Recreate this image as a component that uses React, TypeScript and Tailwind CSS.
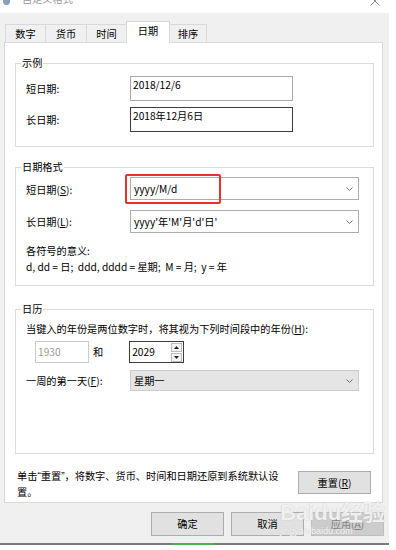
import React from "react";

const Chevron = ({ color = "#707070" }: { color?: string }) => (
  <svg width="9" height="6" viewBox="0 0 9 6" className="shrink-0">
    <path d="M1.5 1.5 L4.5 4.5 L7.5 1.5" fill="none" stroke={color} strokeWidth="1" />
  </svg>
);

const U = ({ c }: { c: string }) => <span className="underline underline-offset-[1px]">{c}</span>;

const Q = ({ c }: { c: string }) => <span className="font-['Liberation_Sans',sans-serif]">{c}</span>;

function Combo({ text, gray = false, w = "w-[229px]", h = "h-[23px]" }: { text: string; gray?: boolean; w?: string; h?: string }) {
  return (
    <div
      className={`${w} ${h} flex items-center justify-between pl-[3px] pr-[4px] border ${
        gray ? "bg-[#e5e5e5] border-[#cccccc]" : "bg-white border-[#adadad]"
      }`}
    >
      <span className="whitespace-nowrap">{text}</span>
      <Chevron />
    </div>
  );
}

function Group({ title, className, children }: { title: string; className: string; children: React.ReactNode }) {
  return (
    <div className={`relative ml-[10px] w-[359px] border border-[#dcdcdc] ${className}`}>
      <span className="absolute left-[5px] -top-[9px] bg-white px-[1px] leading-[16px]">{title}</span>
      {children}
    </div>
  );
}

export default function App() {
  const tabBase = "flex items-center justify-center border-t border-l border-r border-[#d9d9d9] -ml-px";
  return (
    <div className="w-[396px] h-[550px] bg-white overflow-hidden relative font-['Microsoft_YaHei_UI','Noto_Sans_CJK_SC',sans-serif] text-[10.2px] text-black">
      {/* title bar */}
      <div className="h-[13px] w-[389px] overflow-hidden flex items-start">
        <div className="-mt-[6px] ml-[3px] w-[7px] h-[11px] rounded-sm bg-[#8aa0b8]" />
        <span className="-mt-[9px] ml-[12px] text-[#9a9a9a] leading-[16px] whitespace-nowrap">自定义格式</span>
        <div className="flex-1" />
        <svg width="10" height="10" viewBox="0 0 10 10" className="-mt-[4px] mr-[9px]">
          <path d="M0.5 0.5 L9.5 9.5 M9.5 0.5 L0.5 9.5" stroke="#8a8a8a" strokeWidth="1" />
        </svg>
      </div>

      {/* dialog body */}
      <div className="w-[389px] h-[530px] bg-[#f0f0f0] flex flex-col">
        {/* tabs */}
        <div className="h-[30px] pl-[6px] flex items-end relative z-10 -mb-px">
          <div className={`${tabBase} w-[41px] h-[18px] mb-px bg-[#f0f0f0]`}>数字</div>
          <div className={`${tabBase} w-[42px] h-[18px] mb-px bg-[#f0f0f0]`}>货币</div>
          <div className={`${tabBase} w-[41px] h-[18px] mb-px bg-[#f0f0f0]`}>时间</div>
          <div className={`${tabBase} w-[44px] h-[22px] bg-white pb-[3px] relative z-10`}>日期</div>
          <div className={`${tabBase} w-[38px] h-[18px] mb-px bg-[#f0f0f0]`}>排序</div>
        </div>

        {/* panel */}
        <div className="ml-[4px] w-[379px] h-[461px] border border-[#d9d9d9] bg-white flex flex-col">
          {/* 示例 */}
          <Group title="示例" className="mt-[20px] h-[84px] pt-[12px] pl-[10px]">
            <div className="flex items-center h-[25px]">
              <span className="w-[104px]">短日期:</span>
              <div className="w-[163px] h-[25px] border border-[#a8a8a8] pl-[2px] leading-[16px]">2018/12/6</div>
            </div>
            <div className="flex items-center h-[25px] mt-[6px]">
              <span className="w-[104px]">长日期:</span>
              <div className="w-[163px] h-[25px] border border-[#3c3c3c] pl-[2px] leading-[16px]">2018年12月6日</div>
            </div>
          </Group>

          {/* 日期格式 */}
          <Group title="日期格式" className="mt-[20px] h-[119px] pt-[9px] pl-[10px]">
            <div className="flex items-center h-[23px]">
              <span className="w-[104px] pt-[2px]">
                短日期(<U c="S" />):
              </span>
              <div className="relative">
                <Combo text="yyyy/M/d" />
                <div className="absolute -left-[5px] -top-[3px] w-[96px] h-[30px] border-2 border-[#e8322e] rounded-[2px]" />
              </div>
            </div>
            <div className="flex items-center h-[23px] mt-[10px]">
              <span className="w-[104px]">
                长日期(<U c="L" />):
              </span>
              <Combo text="yyyy'年'M'月'd'日'" />
            </div>
            <div className="mt-[10px] leading-[16px]">各符号的意义:</div>
            <div className="leading-[16px] whitespace-pre">d, dd = 日;  ddd, dddd = 星期;  M = 月;  y = 年</div>
          </Group>

          {/* 日历 */}
          <Group title="日历" className="mt-[23px] h-[145px] pt-[11px] pl-[10px]">
            <div className="leading-[16px] whitespace-nowrap">
              当键入的年份是两位数字时，将其视为下列时间段中的年份(<U c="H" />):
            </div>
            <div className="flex items-center h-[22px] mt-[4px]">
              <div className="ml-[9px] w-[54px] h-[22px] border border-[#cccccc] flex items-center pl-[2px] text-[#9a9a9a]">
                1930
              </div>
              <span className="ml-[4px]">和</span>
              <div className="ml-[26px] w-[55px] h-[22px] border border-[#3c3c3c] flex items-center justify-between pl-[2px] pr-[1px]">
                <span>2029</span>
                <div className="flex flex-col gap-[1px]">
                  <div className="w-[11px] h-[9px] border border-[#bdbdbd] bg-[#f4f4f4] flex items-center justify-center">
                    <svg width="5" height="3" viewBox="0 0 5 3"><path d="M0 3 L2.5 0 L5 3 Z" fill="#222" /></svg>
                  </div>
                  <div className="w-[11px] h-[9px] border border-[#bdbdbd] bg-[#f4f4f4] flex items-center justify-center">
                    <svg width="5" height="3" viewBox="0 0 5 3"><path d="M0 0 L2.5 3 L5 0 Z" fill="#222" /></svg>
                  </div>
                </div>
              </div>
            </div>
            <div className="flex items-center h-[21px] mt-[7px]">
              <span className="w-[104px]">
                一周的第一天(<U c="F" />):
              </span>
              <Combo text="星期一" gray h="h-[21px]" />
            </div>
          </Group>

          {/* reset */}
          <div className="flex items-start mt-[14px] pl-[12px]">
            <div className="w-[276px] leading-[15px]">
              <div className="whitespace-nowrap">
                单击<Q c="“" />重置<Q c="”" />，将数字、货币、时间和日期还原到系统默认设
              </div>
              <div className="whitespace-nowrap">置。</div>
            </div>
            <div className="ml-[5px] mt-[3px] w-[73px] h-[23px] border border-[#adadad] bg-[#e1e1e1] flex items-center justify-center">
              重置(<U c="R" />)
            </div>
          </div>
        </div>

        {/* bottom buttons */}
        <div className="flex justify-end gap-[7px] pr-[5px] mt-[9px]">
          <div className="w-[73px] h-[24px] border border-[#adadad] bg-[#e1e1e1] flex items-center justify-center">确定</div>
          <div className="w-[73px] h-[24px] border border-[#adadad] bg-[#e1e1e1] flex items-center justify-center">取消</div>
          <div className="w-[73px] h-[24px] border border-[#bfbfbf] bg-[#cccccc] flex items-center justify-center text-[#838383]">
            应用(<U c="A" />)
          </div>
        </div>
      </div>

      {/* bottom line */}
      <div className="w-[389px] h-[2px] bg-[#7a7a7a] flex">
        <div className="ml-[172px] w-[42px] h-[2px] bg-[#4caf50]" />
      </div>

      {/* watermark */}
      <div className="absolute left-[280px] top-[500px] flex flex-col items-start pointer-events-none">
        <span className="text-[22px] font-bold leading-[26px] text-white/80 [text-shadow:0_0_1px_#b0b0b0] font-['Liberation_Sans','Noto_Sans_CJK_SC',sans-serif]">
          Baidu经验
        </span>
        <span className="text-[9px] leading-[11px] text-white/90 [text-shadow:0_0_1px_#b0b0b0] font-['Liberation_Sans',sans-serif]">
          jingyan.baidu.com
        </span>
      </div>
    </div>
  );
}
